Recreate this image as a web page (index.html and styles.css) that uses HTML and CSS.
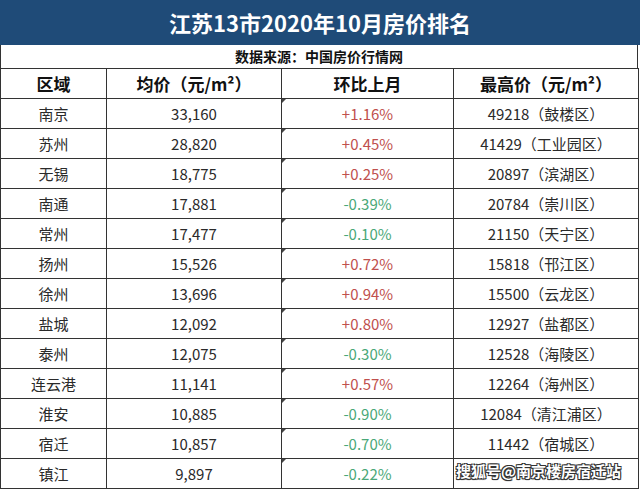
FILE: index.html
```html
<!DOCTYPE html>
<html lang="zh">
<head>
<meta charset="utf-8">
<link rel="stylesheet" href="styles.css">
</head>
<body>
<div class="sheet">
  <div class="title">江苏13市2020年10月房价排名</div>
  <div class="source">数据来源：中国房价行情网</div>
  <table class="grid">
    <colgroup><col class="c1"><col class="c2"><col class="c3"><col class="c4"></colgroup>
    <thead>
      <tr><th>区域</th><th>均价（元/m²）</th><th>环比上月</th><th>最高价（元/m²）</th></tr>
    </thead>
    <tbody>
      <tr><td>南京</td><td>33,160</td><td class="up">+1.16%</td><td>49218（鼓楼区）</td></tr>
      <tr><td>苏州</td><td>28,820</td><td class="up">+0.45%</td><td>41429（工业园区）</td></tr>
      <tr><td>无锡</td><td>18,775</td><td class="up">+0.25%</td><td>20897（滨湖区）</td></tr>
      <tr><td>南通</td><td>17,881</td><td class="down">-0.39%</td><td>20784（崇川区）</td></tr>
      <tr><td>常州</td><td>17,477</td><td class="down">-0.10%</td><td>21150（天宁区）</td></tr>
      <tr><td>扬州</td><td>15,526</td><td class="up">+0.72%</td><td>15818（邗江区）</td></tr>
      <tr><td>徐州</td><td>13,696</td><td class="up">+0.94%</td><td>15500（云龙区）</td></tr>
      <tr><td>盐城</td><td>12,092</td><td class="up">+0.80%</td><td>12927（盐都区）</td></tr>
      <tr><td>泰州</td><td>12,075</td><td class="down">-0.30%</td><td>12528（海陵区）</td></tr>
      <tr><td>连云港</td><td>11,141</td><td class="up">+0.57%</td><td>12264（海州区）</td></tr>
      <tr><td>淮安</td><td>10,885</td><td class="down">-0.90%</td><td>12084（清江浦区）</td></tr>
      <tr><td>宿迁</td><td>10,857</td><td class="down">-0.70%</td><td>11442（宿城区）</td></tr>
      <tr><td>镇江</td><td>9,897</td><td class="down">-0.22%</td><td class="last"></td></tr>
    </tbody>
  </table>
  <div class="watermark">搜狐号@南京楼房宿迁站</div>
</div>
</body>
</html>
```
FILE: styles.css
```css
html, body {
  margin: 0;
  padding: 0;
  background: #ffffff;
}
.sheet {
  position: relative;
  width: 640px;
  height: 490px;
  font-family: "Noto Sans CJK SC", "Microsoft YaHei", sans-serif;
  color: #222;
  overflow: hidden;
}
.title {
  height: 45px;
  background: #1f4b78;
  color: #ffffff;
  font-size: 22px;
  font-weight: 700;
  line-height: 45px;
  text-align: center;
  letter-spacing: 0px;
}
.source {
  height: 23px;
  line-height: 23px;
  box-sizing: border-box;
  border-left: 1px solid #333;
  border-right: 1px solid #333;
  margin-right: 2px;
  font-size: 14px;
  font-weight: 700;
  text-align: center;
  color: #111;
}
.grid {
  border-collapse: collapse;
  width: 638px;
  table-layout: fixed;
}
.c1 { width: 106px; }
.c2 { width: 175px; }
.c3 { width: 172px; }
.c4 { width: 185px; }
.grid th, .grid td {
  border: 1px solid #333;
  padding: 0;
  text-align: center;
  white-space: nowrap;
}
.grid th {
  height: 29px;
  font-size: 17px;
  font-weight: 700;
  color: #111;
}
.grid td {
  height: 29px;
  font-size: 15px;
  font-weight: 400;
  color: #2a2a2a;
}
.grid td:nth-child(3) {
  position: relative;
}
.grid td:nth-child(3)::before {
  content: "";
  position: absolute;
  left: 0;
  top: 0;
  width: 0;
  height: 0;
  border-top: 4px solid #444;
  border-right: 4px solid transparent;
}
.grid td.up { color: #c0504d; }
.grid td.down { color: #4aa878; }
.watermark {
  position: absolute;
  left: 456px;
  top: 460px;
  font-size: 15px;
  font-weight: 700;
  color: #ffffff;
  letter-spacing: 0px;
  text-shadow: 1px 1px 0 #333, -1px -1px 0 #333, 1px -1px 0 #333, -1px 1px 0 #333, 0 1px 1px #000;
}
```
